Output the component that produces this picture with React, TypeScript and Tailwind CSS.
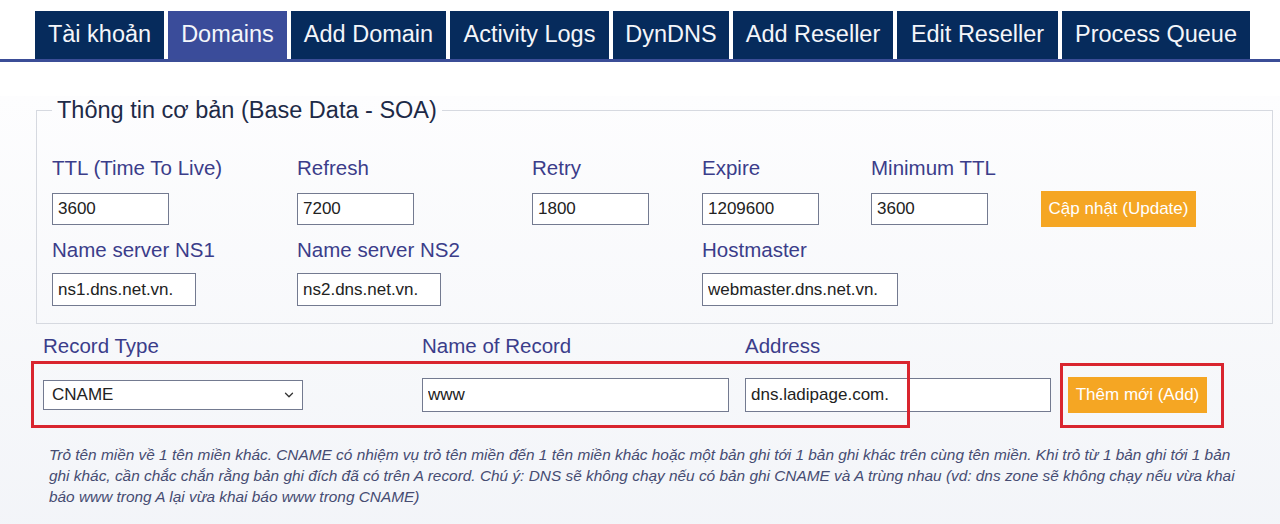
import React from "react";
import { ChevronDown } from "lucide-react";

const tabs: { label: string; w: string; active?: boolean }[] = [
  { label: "Tài khoản", w: "w-[129px]" },
  { label: "Domains", w: "w-[119px]", active: true },
  { label: "Add Domain", w: "w-[155px]" },
  { label: "Activity Logs", w: "w-[159px]" },
  { label: "DynDNS", w: "w-[116px]" },
  { label: "Add Reseller", w: "w-[160px]" },
  { label: "Edit Reseller", w: "w-[161px]" },
  { label: "Process Queue", w: "w-[188px]" },
];

function Label({ children }: { children: React.ReactNode }) {
  return (
    <div className="h-[24px] whitespace-nowrap text-[20.5px] leading-[24px] text-[#3b3d8a]">
      {children}
    </div>
  );
}

function Field({ value, w, h = "h-[32px]" }: { value: string; w: string; h?: string }) {
  return (
    <input
      defaultValue={value}
      className={`${w} ${h} border border-[#737a90] bg-white px-[5px] text-[17px] text-[#222] outline-none`}
    />
  );
}

export default function App() {
  return (
    <div className="h-[524px] w-[1280px] overflow-hidden bg-white font-['Liberation_Sans',Arial,sans-serif]">
      {/* tab strip */}
      <nav className="flex gap-[4px] border-b-[3px] border-[#3b4d97] pl-[35px] pt-[11px]">
        {tabs.map((t) => (
          <div
            key={t.label}
            className={`${t.w} flex h-[48px] items-center justify-center whitespace-nowrap text-[23.5px] text-[#f4f6fa] ${
              t.active ? "bg-[#3a4c9a]" : "bg-[#062b5c]"
            }`}
          >
            {t.label}
          </div>
        ))}
      </nav>

      <div className="h-[462px] bg-linear-to-b from-[#fdfdfe] to-[#f2f4f8]">
        {/* SOA base data */}
        <fieldset className="ml-[36px] mt-[34px] w-[1237px] border border-[#d6d9e0] pb-[17px] pl-[15px]">
          <legend className="px-[5px] text-[23.5px] leading-[28px] text-[#1d2a47]">
            Thông tin cơ bản (Base Data - SOA)
          </legend>
          <div className="mt-[32px] grid grid-cols-[245px_235px_170px_169px_170px_auto] grid-rows-[24px_36px_24px_33px] items-center gap-y-[11px]">
            <Label>TTL (Time To Live)</Label>
            <Label>Refresh</Label>
            <Label>Retry</Label>
            <Label>Expire</Label>
            <Label>Minimum TTL</Label>
            <div />

            <Field value="3600" w="w-[117px]" />
            <Field value="7200" w="w-[117px]" />
            <Field value="1800" w="w-[117px]" />
            <Field value="1209600" w="w-[117px]" />
            <Field value="3600" w="w-[117px]" />
            <button className="h-[36px] w-[155px] bg-[#f5a623] text-[17px] text-white">
              Cập nhật (Update)
            </button>

            <Label>Name server NS1</Label>
            <Label>Name server NS2</Label>
            <div />
            <Label>Hostmaster</Label>
            <div />
            <div />

            <Field value="ns1.dns.net.vn." w="w-[144px]" h="h-[33px]" />
            <Field value="ns2.dns.net.vn." w="w-[144px]" h="h-[33px]" />
            <div />
            <Field value="webmaster.dns.net.vn." w="w-[196px]" h="h-[33px]" />
            <div />
            <div />
          </div>
        </fieldset>

        {/* new record form */}
        <div className="relative">
          <div className="grid grid-cols-[379px_323px_323px_auto] grid-rows-[24px_36px] items-center gap-y-[19px] pl-[43px] pt-[10px]">
            <Label>Record Type</Label>
            <Label>Name of Record</Label>
            <Label>Address</Label>
            <div />

            <div className="flex h-[30px] w-[260px] items-center justify-between border border-[#737a90] bg-white pl-[8px] pr-[6px] text-[17px] text-[#222]">
              <span>CNAME</span>
              <ChevronDown size={14} strokeWidth={2.2} className="text-[#333]" />
            </div>
            <Field value="www" w="w-[307px]" h="h-[34px]" />
            <Field value="dns.ladipage.com." w="w-[306px]" h="h-[34px]" />
            <button className="h-[36px] w-[139px] bg-[#f5a623] text-[17px] text-white">
              Thêm mới (Add)
            </button>
          </div>

          <p className="mt-[31px] w-[1254px] pl-[49px] text-[15.4px] italic leading-[21px] text-[#464c72]">
            Trỏ tên miền về 1 tên miền khác. CNAME có nhiệm vụ trỏ tên miền đến 1 tên miền khác hoặc một bản ghi tới 1 bản ghi khác trên cùng tên miền. Khi trỏ từ 1 bản ghi tới 1 bản ghi khác, cần chắc chắn rằng bản ghi đích đã có trên A record. Chú ý: DNS sẽ không chạy nếu có bản ghi CNAME và A trùng nhau (vd: dns zone sẽ không chạy nếu vừa khai báo www trong A lại vừa khai báo www trong CNAME)
          </p>

          {/* highlight frames drawn over the form */}
          <div className="pointer-events-none absolute left-[31px] top-[37px] h-[67px] w-[879px] border-[3px] border-[#d9252f]" />
          <div className="pointer-events-none absolute left-[1060px] top-[39px] h-[65px] w-[164px] border-[3px] border-[#d9252f]" />
        </div>
      </div>
    </div>
  );
}
